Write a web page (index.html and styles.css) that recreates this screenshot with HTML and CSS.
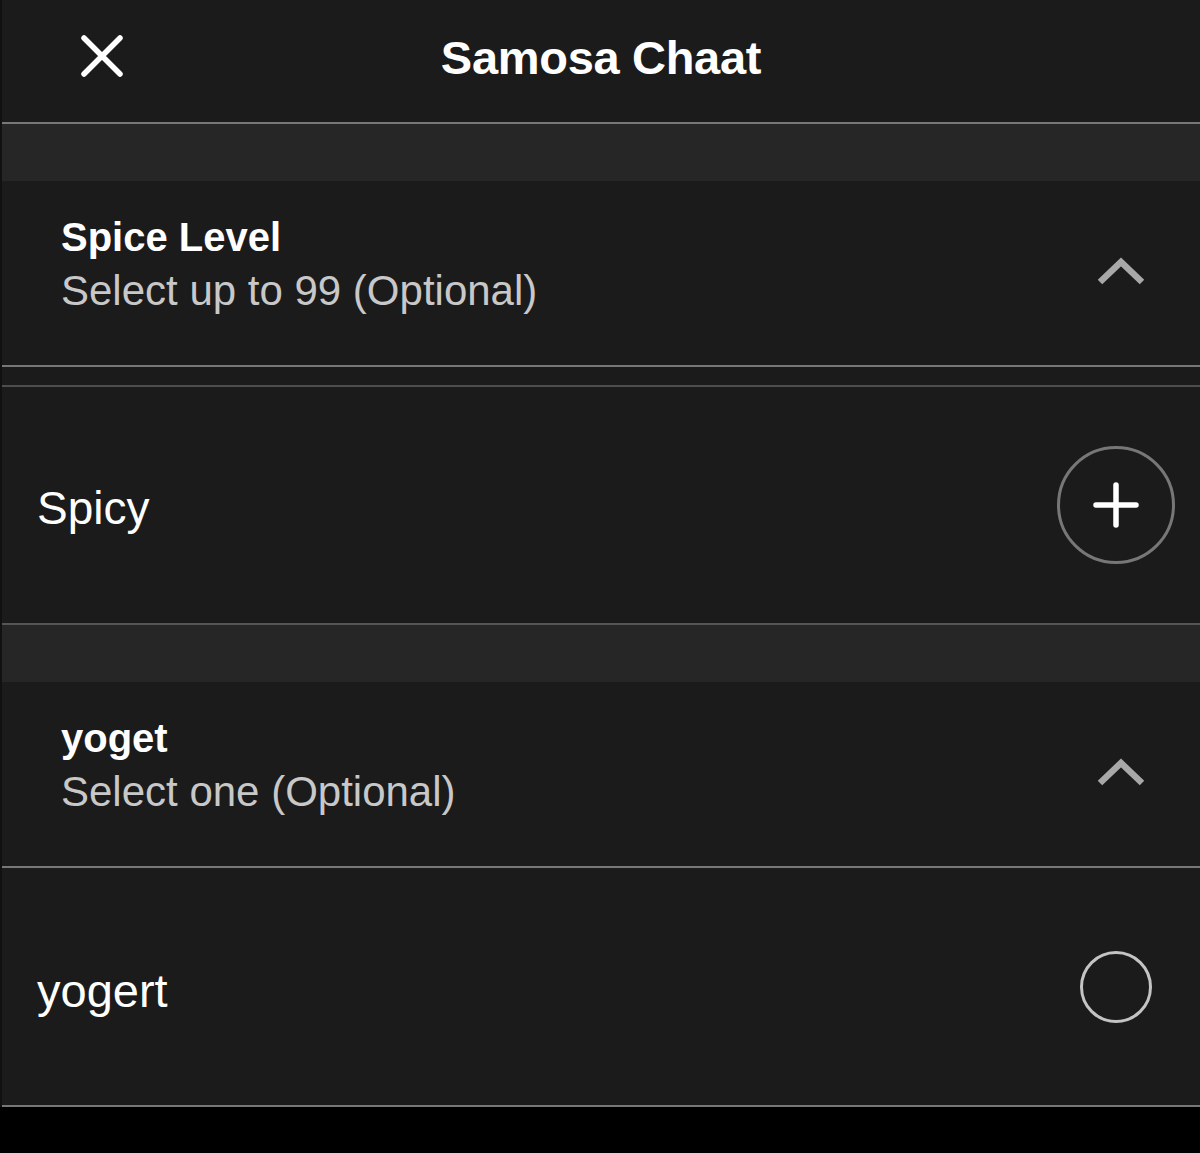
FILE: index.html
```html
<html>
<head>
<link rel="stylesheet" href="styles.css">
</head>
<body>
<div class="sheet">
    <div class="top">
        <div class="close">
            <svg width="48" height="48" viewBox="0 0 48 48"><path d="M6 6 L42 42 M42 6 L6 42" stroke="#fff" stroke-width="5.5" stroke-linecap="round"/></svg>
        </div>
        <div class="title">Samosa Chaat</div>
    </div>
    <div class="band"></div>
    <div class="group">
        <div class="group-text">
            <div class="group-name">Spice Level</div>
            <div class="group-rule">Select up to 99 (Optional)</div>
        </div>
        <svg class="chev" width="50" height="30" viewBox="0 0 50 30"><path d="M4 26 L25 6 L46 26" fill="none" stroke="#a8a8a8" stroke-width="6.5"/></svg>
    </div>
    <div class="spacer"></div>
    <div class="option">
        <div class="option-name">Spicy</div>
        <div class="stepper">
            <svg width="46" height="46" viewBox="0 0 46 46"><path d="M23 3 V43 M3 23 H43" stroke="#fff" stroke-width="5.5" stroke-linecap="round"/></svg>
        </div>
    </div>
    <div class="band"></div>
    <div class="group">
        <div class="group-text">
            <div class="group-name">yoget</div>
            <div class="group-rule">Select one (Optional)</div>
        </div>
        <svg class="chev" width="50" height="30" viewBox="0 0 50 30"><path d="M4 26 L25 6 L46 26" fill="none" stroke="#a8a8a8" stroke-width="6.5"/></svg>
    </div>
    <div class="option last">
        <div class="option-name">yogert</div>
        <div class="radio"></div>
    </div>
</div>
</body>
</html>
```

FILE: styles.css
```css
body {
    margin: 0;
    background: #000;
    font-family: "Liberation Sans", Arial, sans-serif;
    color: #fff;
}
.sheet {
    background: #1b1b1b;
    border-left: 2px solid #111;
}
.top {
    height: 122px;
    display: flex;
    align-items: center;
    justify-content: center;
    position: relative;
    border-bottom: 2px solid #777;
}
.close {
    position: absolute;
    left: 76px;
    top: 32px;
}
.title {
    font-size: 47px;
    font-weight: bold;
    letter-spacing: -0.3px;
    margin-top: -8px;
}
.band {
    height: 57px;
    background: #262626;
}
.group {
    height: 184px;
    display: flex;
    align-items: center;
    justify-content: space-between;
    padding: 0 54px 0 59px;
    border-bottom: 2px solid #777;
}
.group-text {
    margin-top: -18px;
}
.group-name {
    font-size: 40px;
    font-weight: bold;
    line-height: 53px;
}
.group-rule {
    font-size: 42px;
    color: #c8c8c8;
    line-height: 53px;
}
.chev {
    margin-top: -4px;
}
.spacer {
    height: 18px;
    border-bottom: 2px solid #4d4d4d;
}
.option {
    height: 236px;
    display: flex;
    align-items: center;
    justify-content: space-between;
    padding: 0 25px 0 35px;
    border-bottom: 2px solid #555;
}
.option.last {
    height: 237px;
    border-bottom-color: #777;
}
.option-name {
    font-size: 46px;
    margin-top: 6px;
}
.last .option-name {
    font-size: 47px;
    margin-top: 8px;
}
.stepper {
    width: 112px;
    height: 112px;
    border: 3.5px solid #777;
    border-radius: 50%;
    display: flex;
    align-items: center;
    justify-content: center;
}
.radio {
    width: 66px;
    height: 66px;
    border: 3px solid #c4c4c4;
    border-radius: 50%;
    margin-right: 23px;
}
```
